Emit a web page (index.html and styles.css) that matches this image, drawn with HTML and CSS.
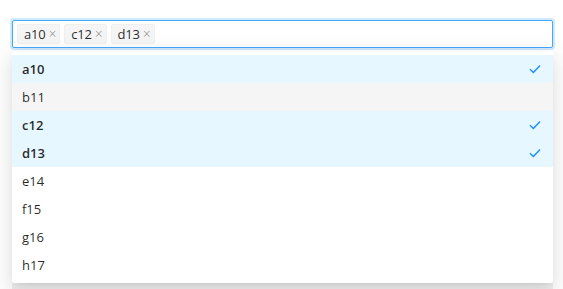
FILE: index.html
```html
<!DOCTYPE html>
<html lang="en">
<head>
    <meta charset="UTF-8">
    <meta name="viewport" content="width=device-width, initial-scale=1.0">
    <title>Multiple Select</title>
    <link rel="stylesheet" href="styles.css">
</head>
<body>
    <div class="page">
        <div class="select-wrap">
            <div class="select">
                <span class="tag">a10<span class="tag-close">×</span></span>
                <span class="tag">c12<span class="tag-close">×</span></span>
                <span class="tag">d13<span class="tag-close">×</span></span>
            </div>

            <ul class="dropdown">
                <li class="option selected">a10<svg class="check" viewBox="0 0 12 10"><path d="M1 5.2 L4.4 8.4 L11 1.6"/></svg></li>
                <li class="option active">b11</li>
                <li class="option selected">c12<svg class="check" viewBox="0 0 12 10"><path d="M1 5.2 L4.4 8.4 L11 1.6"/></svg></li>
                <li class="option selected">d13<svg class="check" viewBox="0 0 12 10"><path d="M1 5.2 L4.4 8.4 L11 1.6"/></svg></li>
                <li class="option">e14</li>
                <li class="option">f15</li>
                <li class="option">g16</li>
                <li class="option">h17</li>
            </ul>
        </div>

        <div class="behind">
            <div class="row"></div>
            <div class="row"></div>
            <div class="row"></div>
            <div class="row short"></div>
            <div class="row"></div>
            <div class="footer-row">
                <span class="chip"></span>
            </div>
        </div>
    </div>
</body>
</html>
```

FILE: styles.css
```css
body {
    margin: 0;
    background-color: #ffffff;
    font-family: 'Segoe UI', 'Open Sans', 'Noto Sans', sans-serif;
    font-size: 13px;
    color: rgba(0, 0, 0, 0.85);
    height: 289px;
    overflow: hidden;
}

.page {
    padding: 20px 10px 0 12px;
}

.select-wrap {
    position: relative;
}

.select {
    height: 28px;
    box-sizing: border-box;
    border: 1px solid #40a9ff;
    border-radius: 2px;
    box-shadow: 0 0 0 2px rgba(24, 144, 255, 0.2);
    padding: 3px 4px;
    display: flex;
    align-items: center;
    gap: 4px;
}

.tag {
    height: 20px;
    box-sizing: border-box;
    display: inline-flex;
    align-items: center;
    padding: 0 3px 0 6px;
    background-color: #f5f5f5;
    border: 1px solid #f0f0f0;
    border-radius: 2px;
    line-height: 18px;
    letter-spacing: -0.2px;
}

.tag-close {
    margin-left: 3px;
    color: rgba(0, 0, 0, 0.45);
    font-size: 14px;
    font-weight: 300;
}

.dropdown {
    position: absolute;
    top: 31px;
    left: 0;
    right: 0;
    margin: 0;
    padding: 4px 0;
    list-style: none;
    background-color: #ffffff;
    border-radius: 2px;
    box-shadow: 0 3px 6px -4px rgba(0, 0, 0, 0.12), 0 6px 16px 0 rgba(0, 0, 0, 0.08), 0 9px 28px 8px rgba(0, 0, 0, 0.05);
    z-index: 2;
}

.option {
    height: 28px;
    box-sizing: border-box;
    padding: 0 12px 0 10px;
    display: flex;
    align-items: center;
    justify-content: space-between;
}

.option.active {
    background-color: #f5f5f5;
}

.option.selected {
    background-color: #e6f7ff;
    font-weight: 600;
}

.check {
    width: 12px;
    height: 10px;
    fill: none;
    stroke: #1890ff;
    stroke-width: 1.4;
}

.behind {
    margin-top: 34px;
}

.row {
    height: 34px;
    border-bottom: 1px solid #f0f0f0;
}

.row.short {
    height: 36px;
}

.footer-row {
    margin-top: 23px;
    height: 10px;
    background-color: #f0f0f0;
    padding: 2px 10px 0;
}

.chip {
    display: inline-block;
    width: 48px;
    height: 8px;
    background-color: #e4e4e4;
}
```
